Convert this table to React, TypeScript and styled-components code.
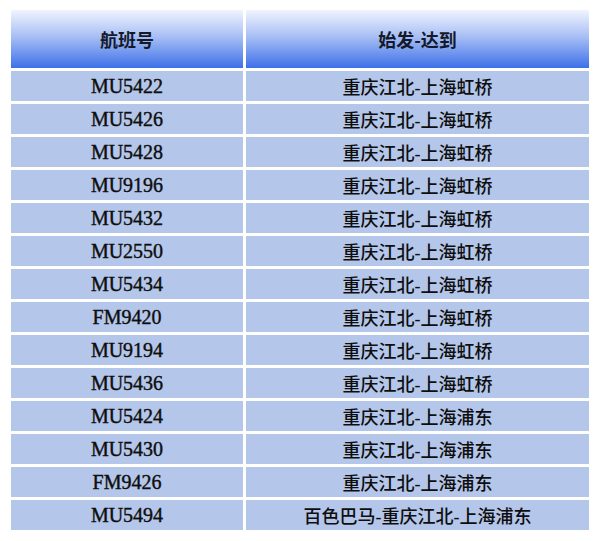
import * as React from 'react';
import styled, { createGlobalStyle } from 'styled-components';

const GlobalStyle = createGlobalStyle`
  html, body {
    margin: 0;
    padding: 0;
    background: #ffffff;
  }
`;

const Page = styled.div`
  padding: 10px 11px;
`;

const Table = styled.div`
  display: grid;
  grid-template-columns: 232px 343px;
  grid-template-rows: 58px;
  grid-auto-rows: 30px;
  gap: 3px;
`;

const HeadCell = styled.div`
  display: flex;
  align-items: center;
  justify-content: center;
  background: linear-gradient(to bottom, #f0f4fe 0%, #a9c0f5 45%, #3d70e8 100%);
  color: #141a2a;
  font-family: 'Noto Sans CJK SC', 'Noto Sans', sans-serif;
  font-weight: 700;
  font-size: 18px;
`;

const Cell = styled.div<{ $cjk?: boolean }>`
  display: flex;
  align-items: center;
  justify-content: center;
  background: #b4c6e9;
  color: #0e0e0e;
  font-family: ${(p) =>
    p.$cjk
      ? "'Liberation Serif', 'Noto Sans CJK SC', serif"
      : "'Liberation Serif', serif"};
  font-weight: 500;
  font-size: ${(p) => (p.$cjk ? '18px' : '20px')};
  white-space: nowrap;
  -webkit-text-stroke: ${(p) => (p.$cjk ? '0' : '0.4px')};
`;

const flights: [string, string][] = [
  ['MU5422', '重庆江北-上海虹桥'],
  ['MU5426', '重庆江北-上海虹桥'],
  ['MU5428', '重庆江北-上海虹桥'],
  ['MU9196', '重庆江北-上海虹桥'],
  ['MU5432', '重庆江北-上海虹桥'],
  ['MU2550', '重庆江北-上海虹桥'],
  ['MU5434', '重庆江北-上海虹桥'],
  ['FM9420', '重庆江北-上海虹桥'],
  ['MU9194', '重庆江北-上海虹桥'],
  ['MU5436', '重庆江北-上海虹桥'],
  ['MU5424', '重庆江北-上海浦东'],
  ['MU5430', '重庆江北-上海浦东'],
  ['FM9426', '重庆江北-上海浦东'],
  ['MU5494', '百色巴马-重庆江北-上海浦东'],
];

export default function App() {
  return (
    <Page>
      <GlobalStyle />
      <Table>
        <HeadCell>航班号</HeadCell>
        <HeadCell>始发-达到</HeadCell>
        {flights.map(([no, route]) => (
          <React.Fragment key={no}>
            <Cell>{no}</Cell>
            <Cell $cjk>{route}</Cell>
          </React.Fragment>
        ))}
      </Table>
    </Page>
  );
}
